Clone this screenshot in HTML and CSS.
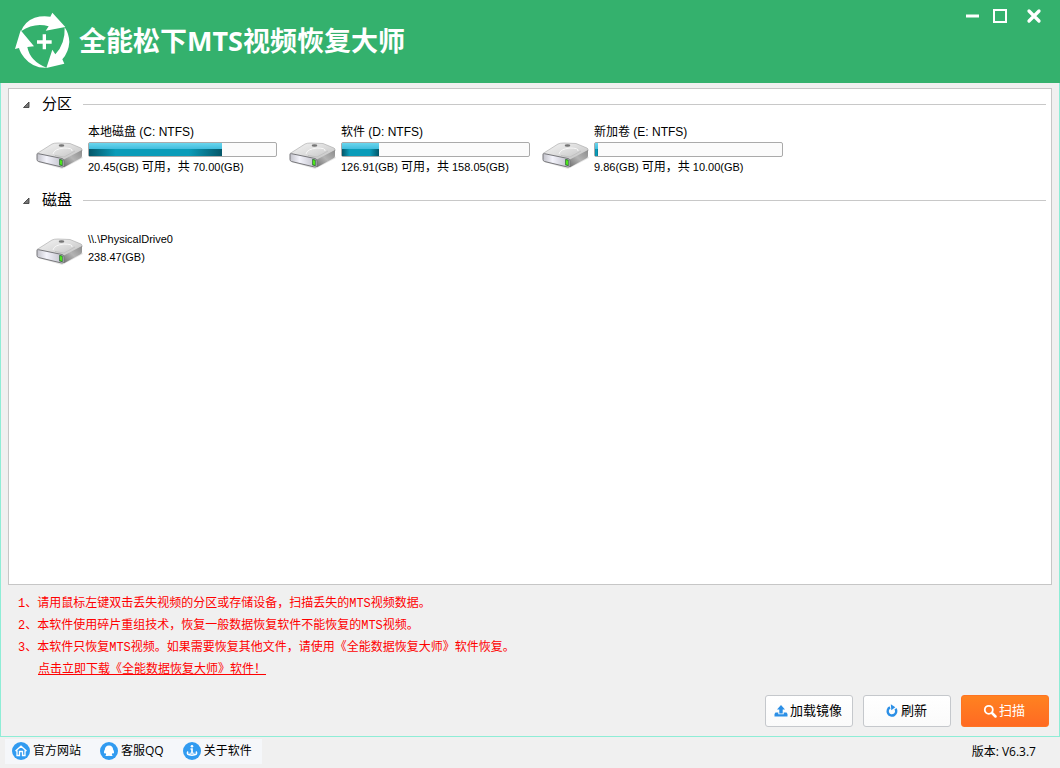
FILE: index.html
```html
<!DOCTYPE html>
<html lang="zh-CN">
<head>
<meta charset="utf-8">
<meta name="viewport" content="width=device-width, initial-scale=1">
<title>全能松下MTS视频恢复大师</title>
<link rel="stylesheet" href="styles.css">
</head>
<body>
<svg class="defs" aria-hidden="true">
  <defs>
    <linearGradient id="top" x1="0" y1="0" x2="1" y2="1"><stop offset="0" stop-color="#f4f4f4"/><stop offset=".5" stop-color="#dcdcdc"/><stop offset="1" stop-color="#bcbcbc"/></linearGradient>
    <linearGradient id="front" x1="0" y1="0" x2="1" y2="0"><stop offset="0" stop-color="#c2c2ca"/><stop offset=".35" stop-color="#f3f3fb"/><stop offset="1" stop-color="#bcbcc6"/></linearGradient>
    <linearGradient id="side" x1="0" y1="1" x2="1" y2="0"><stop offset="0" stop-color="#6e6e6e"/><stop offset=".5" stop-color="#b4b4b4"/><stop offset="1" stop-color="#8c8c8c"/></linearGradient>
    <symbol id="drive" viewBox="0 0 48 32">
      <path d="M2 23L26 30L47 19L44 14Z" fill="#000" opacity=".1"/>
      <path d="M1 14.500L16 5Q18 4 22 4L34 4.500L45 9Q46.500 9.500 46 12L28 21.500L2 17Z" fill="url(#top)" stroke="#a5a5a5" stroke-width=".6"/>
      <path d="M27 21L46 11V17Q46 18.500 44 19.500L28 28.200Z" fill="url(#side)"/>
      <path d="M1 15.500Q1 14.500 2.500 14.700L26 19.500Q28 20 28 22V26.500Q28 28.500 25.500 28L2.500 22.500Q1 22 1 20.500Z" fill="url(#front)" stroke="#77777b" stroke-width="1"/>
      <path d="M17 15Q18 10 28 9Q37 9 36 12" fill="none" stroke="#f8f8f8" stroke-width="1"/>
      <path d="M19 16.500L28 18L39 12" fill="none" stroke="#c2c2c2" stroke-width="1"/>
      <ellipse cx="25.500" cy="6.500" rx="2.800" ry="1.200" fill="#757575"/>
      <path d="M23.300 20L26.600 20.700V27L23.300 26.200Z" fill="#176816"/>
      <path d="M24 21L26 21.500V26L24 25.500Z" fill="#4ee51c"/>
    </symbol>
    <symbol id="arrow" viewBox="0 0 7 7"><path d="M6 1V6.500H.5Z" fill="#777" stroke="#333" stroke-width=".8"/></symbol>
  </defs>
</svg>

<header class="titlebar">
  <svg class="logo" viewBox="42 36 168 171" aria-hidden="true">
    <g fill="#fff">
      <path d="M63 94Q74 64 104 53Q128 46 151 50L157 38L196 81L137 92L146 79Q104 66 63 94Z"/>
      <path d="M194 82Q207 101 208 126Q206 157 187 178L193 191L139 204L157 149L166 163Q196 132 194 82Z"/>
      <path d="M140 203Q99 205 73 173Q60 157 57 144L45 147L62 91L102 139L82 141Q90 184 140 203Z"/>
      <path d="M128 103H138V121H155V131H138V148H128V131H111V121H128Z"/>
    </g>
  </svg>
  <h1 class="title">全能松下MTS视频恢复大师</h1>
  <div class="window-controls">
    <button class="window-button" type="button" aria-label="最小化"><svg viewBox="0 0 16 16"><path d="M2 8H15" stroke="#fff" stroke-width="3"/></svg></button>
    <button class="window-button" type="button" aria-label="最大化"><svg viewBox="0 0 16 16"><path d="M2 2H14V14H2Z" fill="none" stroke="#fff" stroke-width="2"/></svg></button>
    <button class="window-button close" type="button" aria-label="关闭"><svg viewBox="0 0 16 16"><path d="M3 3L13 13M13 3L3 13" stroke="#fff" stroke-width="3.300" stroke-linecap="round"/></svg></button>
  </div>
</header>

<main class="workspace">
  <div class="volumes">
    <section class="group">
      <h2 class="group-title"><svg class="arrow"><use href="#arrow"/></svg>分区</h2>
      <ul class="drives">
        <li class="drive"><svg class="drive-icon"><use href="#drive"/></svg>
          <div class="info"><p class="name">本地磁盘 (C: NTFS)</p><div class="bar"><div class="fill" style="width:71%"></div></div><p class="size">20.45(GB) <span class="han">可用，共</span> 70.00(GB)</p></div></li>
        <li class="drive"><svg class="drive-icon"><use href="#drive"/></svg>
          <div class="info"><p class="name">软件 (D: NTFS)</p><div class="bar"><div class="fill" style="width:19.7%"></div></div><p class="size">126.91(GB) <span class="han">可用，共</span> 158.05(GB)</p></div></li>
        <li class="drive"><svg class="drive-icon"><use href="#drive"/></svg>
          <div class="info"><p class="name">新加卷 (E: NTFS)</p><div class="bar"><div class="fill" style="width:1.4%"></div></div><p class="size">9.86(GB) <span class="han">可用，共</span> 10.00(GB)</p></div></li>
      </ul>
    </section>
    <section class="group">
      <h2 class="group-title"><svg class="arrow"><use href="#arrow"/></svg>磁盘</h2>
      <ul class="drives">
        <li class="drive"><svg class="drive-icon"><use href="#drive"/></svg>
          <div class="info physical"><p class="size">\\.\PhysicalDrive0</p><p class="size">238.47(GB)</p></div></li>
      </ul>
    </section>
  </div>

  <div class="tips">
    <p>1、请用鼠标左键双击丢失视频的分区或存储设备，扫描丢失的MTS视频数据。</p>
    <p>2、本软件使用碎片重组技术，恢复一般数据恢复软件不能恢复的MTS视频。</p>
    <p>3、本软件只恢复MTS视频。如果需要恢复其他文件，请使用《全能数据恢复大师》软件恢复。</p>
    <p class="download"><a href="#">点击立即下载《全能数据恢复大师》软件！</a></p>
  </div>

  <div class="actions">
    <button class="action" type="button"><svg viewBox="0 0 14 14"><path d="M7 1L11 5.500H8.700V9.500H5.300V5.500H3Z" fill="#2b8fe6"/><path d="M1.500 8.500H4.300V10.300H9.700V8.500H12.500L13.500 10V12.500H.5V10Z" fill="#2b8fe6"/></svg>加载镜像</button>
    <button class="action" type="button"><svg viewBox="0 0 14 14"><path d="M5 3.400A4.300 4.300 0 1 0 10.500 4.800" fill="none" stroke="#2b8fe6" stroke-width="2.400"/><path d="M5.800 .3L10.300 3.200L6.300 6.300Z" fill="#2b8fe6"/></svg>刷新</button>
    <button class="action primary" type="button"><svg viewBox="0 0 14 14"><circle cx="5.800" cy="5.800" r="4" fill="none" stroke="#fff" stroke-width="1.800"/><path d="M9 9L12.500 12.500" stroke="#fff" stroke-width="2.500" stroke-linecap="round"/></svg>扫描</button>
  </div>
</main>

<footer class="statusbar">
  <nav class="links">
    <a href="#"><svg viewBox="0 0 18 18"><circle cx="9" cy="9" r="9" fill="#319bf0"/><path d="M3.500 9L9 4.200L14.500 9M5 8.500V13.500H7.500V9.500H10.500V13.500H13V8.500" fill="none" stroke="#fff" stroke-width="1.300"/></svg>官方网站</a>
    <a href="#"><svg viewBox="0 0 18 18"><circle cx="9" cy="9" r="9" fill="#319bf0"/><path d="M9 3.500C6.300 3.500 4.900 5.300 4.900 7.500C4 9 3.700 10.500 4.200 11.500L5.300 11L6.200 12.500L5.300 14H8.500L9 13.500L9.500 14H12.700L11.800 12.500L12.700 11L13.800 11.500C14.300 10.500 14 9 13.100 7.500C13.100 5.300 11.700 3.500 9 3.500Z" fill="#fff"/></svg>客服QQ</a>
    <a href="#"><svg viewBox="0 0 18 18"><circle cx="9" cy="9" r="9" fill="#319bf0"/><circle cx="9" cy="4.300" r="1.300" fill="#fff"/><path d="M7.500 7H9V11" fill="none" stroke="#fff" stroke-width="1.700"/><path d="M5 9.500Q2.500 13 9 13.200Q15.500 13 13 9.500" fill="none" stroke="#fff" stroke-width="1.500"/><path d="M6.500 11.200H11.500" stroke="#fff"/></svg>关于软件</a>
  </nav>
  <span class="version">版本: V6.3.7</span>
</footer>
</body>
</html>
```
FILE: styles.css
```css
* {
  box-sizing: border-box;
}

body {
  margin: 0;
  min-height: 100vh;
  display: flex;
  flex-direction: column;
  background: #f0f0f0;
  color: #000;
  font: 12px/18px "Liberation Sans", "Noto Sans CJK SC", sans-serif;
}

h1, h2, p, ul {
  margin: 0;
  padding: 0;
}

button {
  font: inherit;
  cursor: pointer;
}

.defs {
  position: absolute;
  width: 0;
  height: 0;
}

.titlebar {
  display: flex;
  align-items: flex-start;
  padding: 12px 18px 14px 14px;
  background: #34b16d;
}

.logo {
  width: 56px;
  height: 57px;
}

.title {
  margin-left: 9px;
  color: #fff;
  font: bold 27px/58px "Open Sans", "Noto Sans CJK SC", sans-serif;
  height: 57px;
}

.window-controls {
  display: flex;
  gap: 12px;
  margin: -4px 0 0 auto;
}

.window-button {
  display: flex;
  padding: 0;
  border: 0;
  background: none;
}

.window-button.close {
  margin-left: 6px;
}

.window-button svg {
  width: 16px;
  height: 16px;
}

.workspace {
  flex: 1;
  display: flex;
  flex-direction: column;
  padding: 5px 7px 9px;
  border: solid #8eedd6;
  border-width: 0 1px 1px;
}

.volumes {
  flex: 1;
  display: flex;
  flex-direction: column;
  gap: 14px;
  padding: 5px 5px 5px 14px;
  border: 1px solid #c6c6c6;
  background: #fff;
}

.group-title {
  display: flex;
  align-items: center;
  font-size: 15px;
  font-weight: normal;
  line-height: 20px;
}

.group-title::after {
  content: "";
  flex: 1;
  height: 1px;
  margin-left: 11px;
  background: #c8c8c8;
}

.arrow {
  width: 7px;
  height: 7px;
  margin-right: 12px;
}

.drives {
  display: flex;
  flex-wrap: wrap;
  gap: 12px;
  padding: 9px 0 0 13px;
  list-style: none;
}

.drive {
  display: flex;
  align-items: flex-start;
  gap: 4px;
}

.drive-icon {
  width: 48px;
  height: 32px;
  margin-top: 16px;
}

.info {
  width: 189px;
}

.physical {
  padding-top: 11px;
}

.bar {
  height: 15px;
  margin: 1px 0;
  border: 1px solid #aaa;
  border-radius: 2px;
  background: #fbfbfb;
}

.fill {
  height: 100%;
  background:
    linear-gradient(to bottom, #6ad6ee 0, #42bddd 45%, transparent 45%),
    linear-gradient(to right, #045668, #0a9cb9 20%, #0a9cb9 75%, #045668);
}

.size {
  font-size: 11px;
}

.han {
  font-size: 12px;
}

.tips {
  padding: 8px 10px 0;
  color: #f00;
  font: 12px/22px "Liberation Mono", "Noto Sans CJK SC", monospace;
}

.tips a {
  color: inherit;
  text-underline-offset: 1px;
}

.download {
  padding-left: 20px;
}

.actions {
  display: flex;
  justify-content: flex-end;
  gap: 10px;
  margin-top: 14px;
  padding-right: 3px;
}

.action {
  display: flex;
  align-items: center;
  justify-content: center;
  gap: 2px;
  width: 88px;
  height: 32px;
  padding: 0 2px 0 0;
  border: 1px solid #c5c8cc;
  border-radius: 3px;
  background: linear-gradient(#fff, #fafafa);
  color: #000;
  font-size: 13px;
}

.action svg {
  width: 14px;
  height: 14px;
}

.action.primary {
  border-color: #ff7422;
  background: linear-gradient(#ff8220, #ff6a23);
  color: #fff;
}

.statusbar {
  display: flex;
  align-items: center;
  justify-content: space-between;
  padding: 2px 24px 4px 5px;
  font-family: "Open Sans", "Noto Sans CJK SC", sans-serif;
}

.links {
  display: flex;
  gap: 19px;
  padding: 3px 10px 4px 7px;
  background: #f5f7fa;
}

.links a {
  display: flex;
  align-items: center;
  gap: 3px;
  color: inherit;
  text-decoration: none;
}

.links svg {
  width: 18px;
  height: 18px;
}
```
